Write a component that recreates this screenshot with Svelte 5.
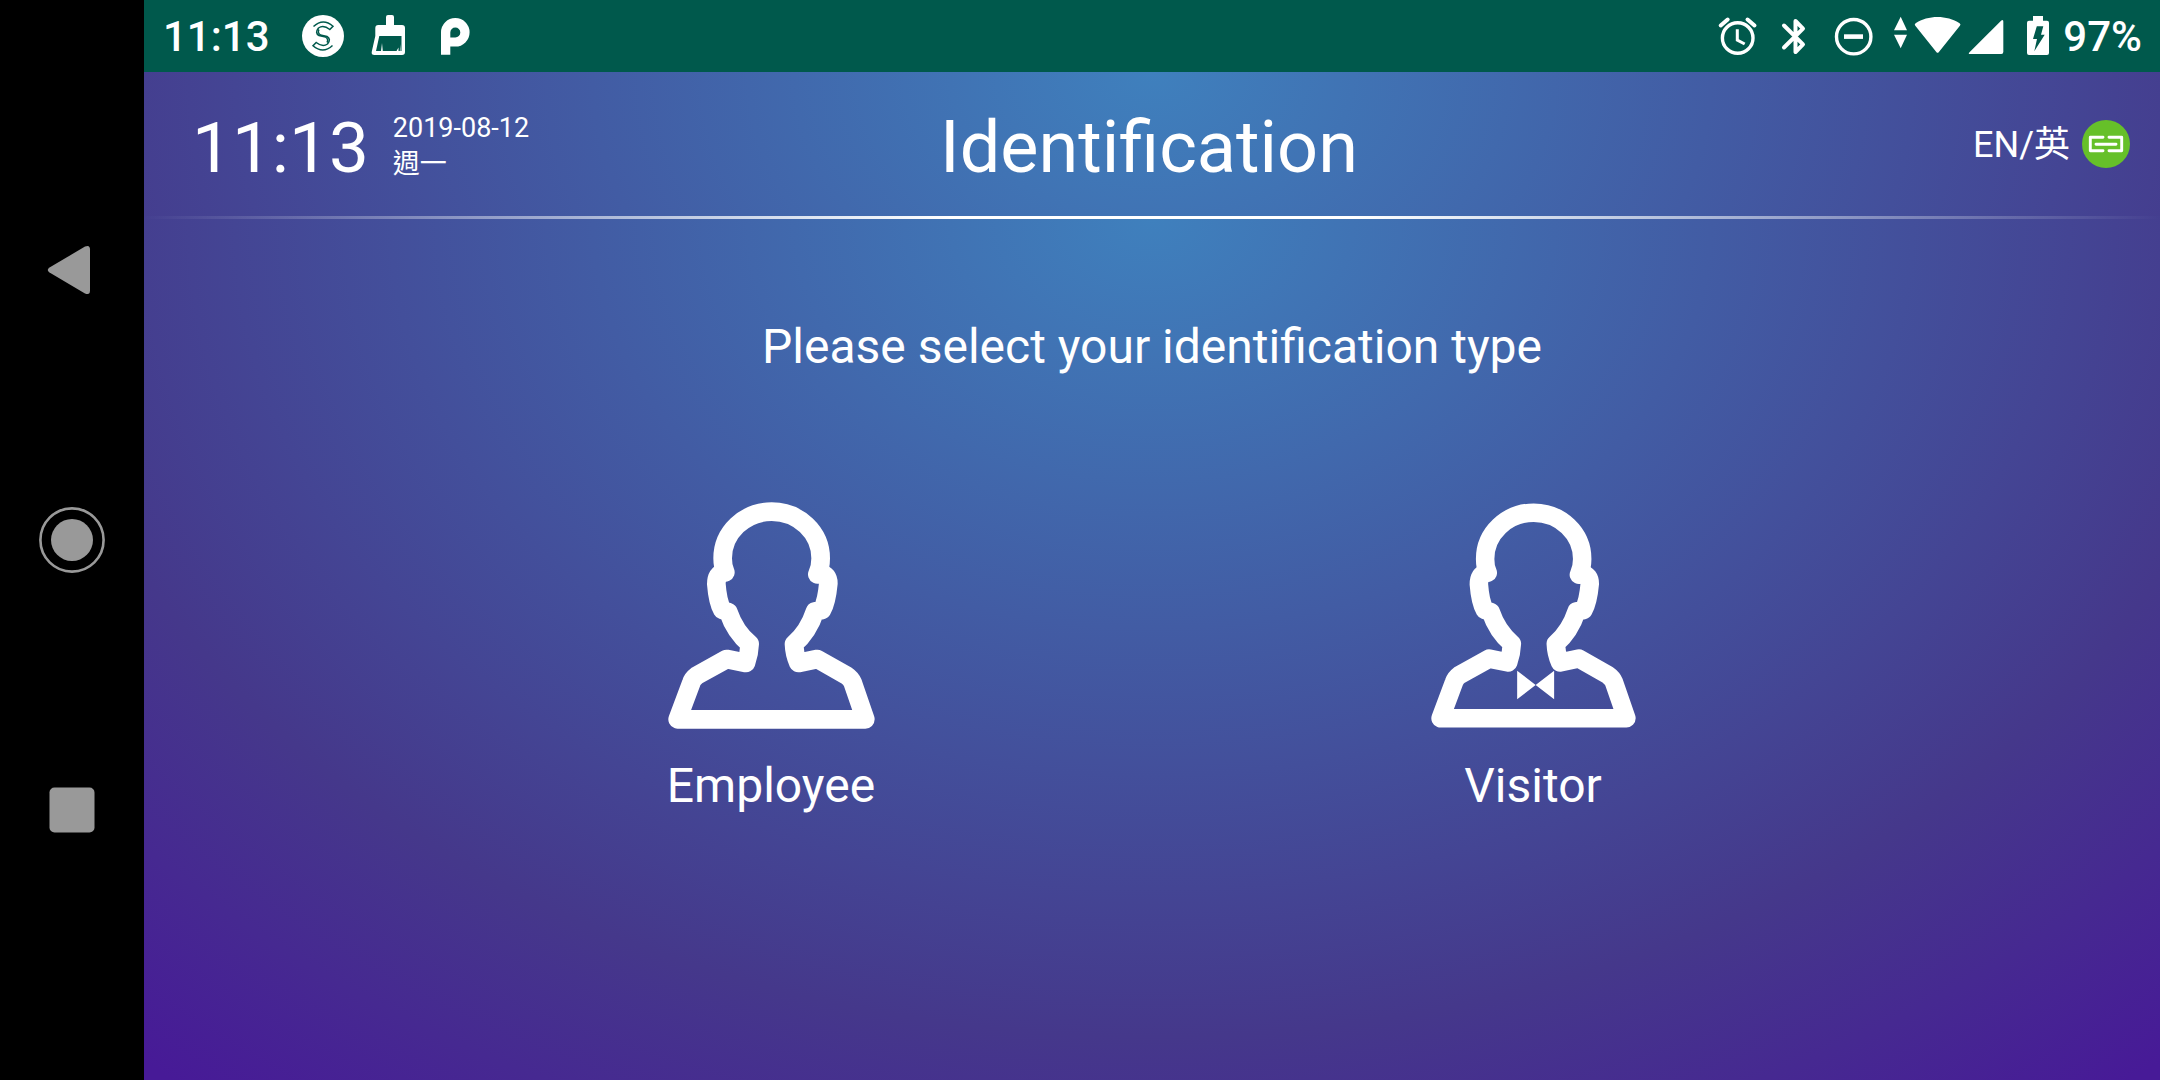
<script>
  const time = '11:13';
  const types = [
    { id: 'employee', label: 'Employee', bow: false },
    { id: 'visitor', label: 'Visitor', bow: true }
  ];
</script>

<div class="device">
  <nav class="keys" aria-label="System navigation">
    <button aria-label="Back">
      <svg width="66" height="66" viewBox="0 0 66 66"><path d="M10.500 30.500L46 9.600Q51 7.500 51 12.500V53.500Q51 58.500 46 56.400L10.500 35.500Q7 33 10.500 30.500Z" fill="#999" /></svg>
    </button>
    <button aria-label="Home">
      <svg width="66" height="66" viewBox="0 0 66 66"><circle cx="33" cy="33" r="31.600" fill="none" stroke="#999" stroke-width="2.600" /><circle cx="33" cy="33" r="21" fill="#999" /></svg>
    </button>
    <button aria-label="Recent apps">
      <svg width="66" height="66" viewBox="0 0 66 66"><rect x="10.500" y="10.500" width="45" height="45" rx="5" fill="#999" /></svg>
    </button>
  </nav>

  <div class="screen">
    <div class="status">
      <div class="group notices">
        <span class="clock">{time}</span>
        <svg width="48" height="48" viewBox="0 0 48 48">
          <circle cx="24" cy="24" r="21" fill="#fff" />
          <g fill="none" stroke="#00594c" stroke-width="1.500">
            <path d="M14.500 14.500Q24 5.500 34 14.200L30.800 17.500Q24.500 12.500 19.500 16Q15.500 21 20 23.500L26.500 25Q30 27.500 28 30.500" />
            <path d="M14.500 14.500Q24 5.500 34 14.200L30.800 17.500Q24.500 12.500 19.500 16Q15.500 21 20 23.500L26.500 25Q30 27.500 28 30.500" transform="rotate(180 24 24)" />
          </g>
        </svg>
        <svg width="48" height="48" viewBox="0 0 48 48">
          <path fill="#fff" fill-rule="evenodd" d="M21 5Q21 3 23 3H27Q29 3 29 5V13H37Q40 13 40 16V40Q40 43 37 43H9.500Q6 43 6.800 39.500L10.300 24V16Q10.300 13 13.300 13H21ZM14.300 24L11 39H16L17 31L17.800 39H31.500L33.500 35.500V39H34.800L35.500 32V39H36.500V24Z" />
        </svg>
        <svg width="48" height="48" viewBox="0 0 48 48">
          <path fill="#fff" fill-rule="evenodd" d="M10 42.700V20.300A14.300 14.300 0 1 1 24.300 34.600H19.300V42.700ZM19.300 25.500H24.300A5 5 0 1 0 19.300 20.500Z" />
        </svg>
      </div>
      <div class="group">
        <svg width="48" height="48" viewBox="0 0 48 48" fill="none" stroke="#fff" stroke-width="3.400">
          <circle cx="25.700" cy="26" r="15.300" />
          <path d="M8.700 13.500L15.700 7.500M35.500 7.500L42.500 13.500" stroke-width="4" stroke-linecap="round" />
          <path d="M25.300 17.300V28L32.700 32" stroke-width="3" />
        </svg>
        <svg width="48" height="48" viewBox="0 0 48 48" fill="none" stroke="#fff" stroke-width="4">
          <path d="M12 13.500L31 32.300L23.500 40V9L31 16.700L12 35.500" stroke-linecap="round" stroke-linejoin="round" />
        </svg>
        <svg width="48" height="48" viewBox="0 0 48 48">
          <circle cx="21.700" cy="24.700" r="17.200" fill="none" stroke="#fff" stroke-width="3.400" />
          <rect x="12" y="22.300" width="19" height="4.600" fill="#fff" />
        </svg>
        <svg width="122" height="48" viewBox="0 0 122 48" fill="#fff">
          <path d="M8.700 4.700L15 18.300H2ZM2 22.700H15L8.700 36.300Z" />
          <path d="M23.300 13.800Q22 12.300 23.600 11.200C36 2.800 55 2.800 67.600 11.200Q69.200 12.300 67.900 13.800L46.700 40.200Q45.600 41.400 44.500 40.200Z" />
          <path d="M109.300 8.600Q111.300 7 111.300 9.500V40Q111.300 42 109.300 42H78Q75.800 42 77.500 40.200Z" />
        </svg>
        <svg width="24" height="48" viewBox="0 0 24 48">
          <path d="M7 4H17V8.700H21Q23 8.700 23 10.700V41Q23 43 21 43H3Q1 43 1 41V10.700Q1 8.700 3 8.700H7Z" fill="#fff" />
          <path d="M10.800 14.300H17.300L15 22.700H18.700L8.300 39.300L11 27H7Z" fill="#00594c" />
        </svg>
        <span class="clock">97%</span>
      </div>
    </div>

    <header>
      <div class="now">
        <time class="hour">{time}</time>
        <div class="date"><span>2019-08-12</span><span>週一</span></div>
      </div>
      <h1>Identification</h1>
      <div class="tools">
        <button class="lang">EN/英</button>
        <svg width="48" height="48" viewBox="0 0 48 48" role="img" aria-label="Connected">
          <circle cx="24" cy="24" r="24" fill="#66c029" />
          <path d="M21 17.300H8.300V30.700H21M27 17.300H39.700V30.700H27M14 24.200H34" fill="none" stroke="#fff" stroke-width="2.900" stroke-linecap="round" stroke-linejoin="round" />
        </svg>
      </div>
    </header>
    <div class="rule"></div>

    <main>
      <p>Please select your identification type</p>
      <div class="types">
        {#each types as type (type.id)}
          <button class="type">
            <svg class:guest={type.bow} viewBox="54 66 621 681" aria-hidden="true">
              <g fill="none" stroke="#fff" stroke-width="56" stroke-linecap="round" stroke-linejoin="round">
                <path d="M226 277Q218 260 218 235A147 140 0 0 1 512 235Q512 262 502 283" />
                <path d="M220 277Q199 284 199 312Q203 365 217 390L235 396Q255 455 299 492Q298 520 288 549L230 537L140 587Q128 596 124 608L83 718H646L608 608Q603 596 590 587L502 537L445 549Q433 522 432 492Q475 455 495 394L516 390Q530 365 535 310Q535 284 512 280" />
              </g>
              {#if type.bow}
                <path d="M315 574L371 617L315 660ZM427 574L371 617L427 660Z" fill="#fff" />
              {/if}
            </svg>
            <span>{type.label}</span>
          </button>
        {/each}
      </div>
    </main>
  </div>
</div>

<style>
  :global(body) {
    background: #000;
  }
  .device {
    --glow: radial-gradient(76% 1120px at top, #3f80bd, #45388b 73%, #471a97 100%);
    display: grid;
    grid-template-columns: 144px 1fr;
    min-height: 100vh;
    color: #fff;
    font-family: Roboto, 'Noto Sans CJK TC', sans-serif;
  }
  svg {
    display: block;
    flex: none;
  }
  button {
    border: 0;
    padding: 0;
    background: none;
    color: inherit;
    font: inherit;
    cursor: pointer;
  }
  .keys {
    display: grid;
    grid-template-rows: repeat(3, 1fr);
    box-sizing: border-box;
    padding: 12.5vh 0;
    background: #000;
  }
  .keys button {
    display: grid;
    place-items: center;
  }
  .screen {
    display: flex;
    flex-direction: column;
    min-width: 0;
  }
  .status {
    display: flex;
    justify-content: space-between;
    align-items: center;
    height: 72px;
    padding: 0 18px;
    background: #00594c;
  }
  .group {
    display: flex;
    align-items: center;
    gap: 12px;
  }
  .notices {
    gap: 18px;
  }
  .clock {
    font-size: 42px;
    font-weight: 500;
    line-height: 48px;
    padding: 2px 0 0 1px;
  }
  .notices .clock {
    padding-right: 11px;
  }
  header {
    display: grid;
    grid-template-columns: 1fr auto 1fr;
    align-items: center;
    height: 144px;
    padding: 0 30px 0 24px;
    box-sizing: border-box;
    background: var(--glow);
  }
  .now {
    display: flex;
    align-items: center;
    gap: 24px;
    padding-left: 24px;
  }
  .hour,
  h1 {
    margin: 0;
    font-size: 72px;
    font-weight: 400;
    line-height: 84px;
    padding-top: 8px;
  }
  .hour {
    font-size: 71px;
  }
  .date {
    display: flex;
    flex-direction: column;
    padding-top: 4px;
    font-size: 27px;
    line-height: 36px;
  }
  .tools {
    display: flex;
    justify-content: flex-end;
    align-items: center;
    gap: 12px;
  }
  .lang {
    padding-top: 2px;
    font-size: 36px;
    line-height: 48px;
  }
  .rule {
    height: 3px;
    background: linear-gradient(90deg, transparent, #fff 40%, #fff 60%, transparent), var(--glow);
  }
  main {
    flex: 1;
    padding: 100px 0 48px;
    background: var(--glow);
  }
  p {
    margin: 0 0 127px;
    font-size: 48px;
    line-height: 56px;
    text-align: center;
  }
  .types {
    display: grid;
    grid-template-columns: 1fr 1fr;
    max-width: 1524px;
    margin: 0 auto;
  }
  .type {
    display: flex;
    flex-direction: column;
    align-items: center;
    justify-self: center;
    gap: 29px;
    font-size: 48px;
    line-height: 56px;
  }
  .type svg {
    width: 207px;
    height: 227px;
  }
  .type .guest {
    width: 205px;
  }
</style>
